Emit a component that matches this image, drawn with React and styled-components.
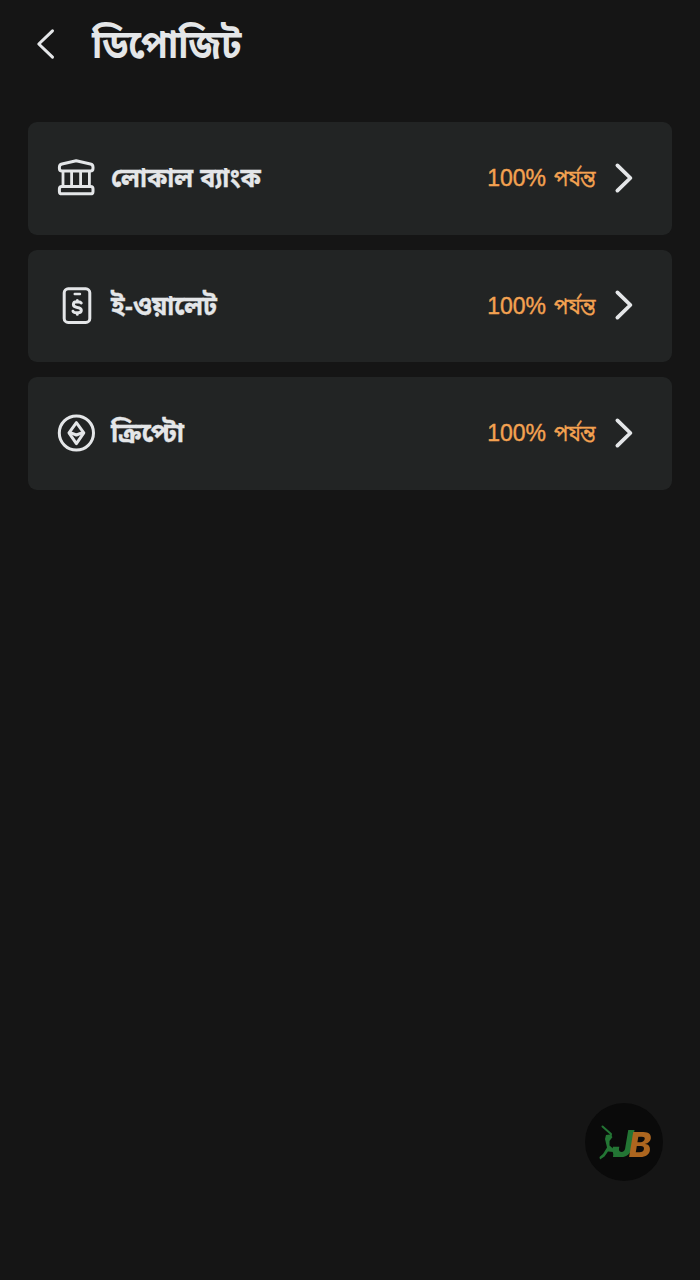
import React from 'react';
import styled, { createGlobalStyle } from 'styled-components';

const GlobalStyle = createGlobalStyle`
  * {
    box-sizing: border-box;
  }

  body {
    margin: 0;
    background: #151515;
    color: #e4e6e8;
    font-family: "Liberation Sans", "Noto Sans Bengali", "Noto Sans", sans-serif;
  }
`;

const Page = styled.div`
  min-height: 1280px;
  background: #151515;
`;

const Header = styled.header`
  display: flex;
  align-items: center;
  height: 88px;
  padding-left: 36px;
`;

const BackButton = styled.button`
  display: flex;
  width: 20px;
  margin-right: 36px;
  padding: 0;
  border: none;
  background: none;
  color: inherit;
  cursor: pointer;
`;

const Title = styled.h1`
  margin: 0;
  font-size: 40px;
  line-height: 60px;
  font-weight: bold;
  white-space: nowrap;
  transform: scaleX(0.905);
  transform-origin: left center;
`;

const List = styled.main`
  display: flex;
  flex-direction: column;
  gap: 15px;
  padding: 34px 28px 0;
`;

const Card = styled.div`
  display: flex;
  align-items: center;
  height: 112.5px;
  padding: 0 38px 0 28px;
  border-radius: 9px;
  background: #222424;
  cursor: pointer;
`;

const Label = styled.span`
  flex: 1;
  margin-left: 15px;
  font-size: 26px;
  line-height: 40px;
  font-weight: bold;
  white-space: nowrap;
  transform: scaleX(${({ $stretch }) => $stretch});
  transform-origin: left center;
  -webkit-text-stroke: 0.3px currentColor;
`;

const Bonus = styled.span`
  display: flex;
  align-items: baseline;
  gap: 8px;
  margin-right: 18px;
  color: #f4a251;
  font-size: 23px;
  line-height: 36px;
  white-space: nowrap;
  -webkit-text-stroke: 0.4px currentColor;
`;

const Suffix = styled.span`
  width: 42px;
  transform: scaleX(0.86);
  transform-origin: left center;
`;

const Icon = styled.svg`
  display: block;
  flex: none;
  fill: none;
  stroke: currentColor;
  stroke-linecap: round;
  stroke-linejoin: round;
`;

const Arrow = styled(Icon)`
  margin-bottom: 1px;
`;

const FloatingButton = styled.button`
  position: fixed;
  right: 37px;
  bottom: 99px;
  width: 78px;
  height: 78px;
  padding: 0;
  border: none;
  border-radius: 50%;
  background: #0a0a0a;
  cursor: pointer;
`;

const Logo = styled.svg`
  display: block;
  font-family: Inter, sans-serif;
  font-weight: 800;
  font-style: italic;
`;

const BankIcon = () => (
  <Icon width="40" height="40" viewBox="0 0 40 40" strokeWidth="3">
    <path d="M3.4 9.2 Q3.4 6.6 6 6 L20.2 2.8 L34.4 6 Q37 6.6 37 9.2 V10.2 Q37 13 34.4 13 H6 Q3.4 13 3.4 10.2 Z" />
    <rect x="3.4" y="28.4" width="33.6" height="7.4" rx="2.4" />
    <path strokeWidth="2.8" d="M7 14 V28 M15.6 14 V28 M24.6 14 V28 M33.4 14 V28" />
  </Icon>
);

const WalletIcon = () => (
  <Icon width="40" height="40" viewBox="0 0 40 40" strokeWidth="3">
    <rect x="8.2" y="2.8" width="25.6" height="33.6" rx="4" />
    <path d="M18.7 8 H24" strokeWidth="2.4" />
    <path d="M25.2 17 Q24.5 15.8 22 15.8 H20.6 Q17.4 15.8 17.4 18.6 Q17.4 21 21.2 21.4 Q25.3 21.9 25.3 24.2 Q25.3 26.7 22 26.7 H20.4 Q17.6 26.7 17 25.2 M21.3 14.5 V16 M21.3 27 V28.3" />
  </Icon>
);

const CryptoIcon = () => (
  <Icon width="40" height="40" viewBox="0 0 40 40" strokeWidth="3">
    <circle cx="20.4" cy="20" r="17.1" />
    <path d="M20.4 9.7 L27.8 19.8 L20.4 30.6 L13 19.8 Z" />
    <path d="M14.2 19.6 L20.4 22 L26.6 19.6" />
  </Icon>
);

const ArrowIcon = () => (
  <Arrow width="20" height="32" viewBox="0 0 20 32" strokeWidth="3.8">
    <path d="M3.4 3.4 L16.4 16 L3.4 28.6" />
  </Arrow>
);

const methods = [
  { name: 'লোকাল ব্যাংক', stretch: 0.96, icon: BankIcon },
  { name: 'ই-ওয়ালেট', stretch: 0.955, icon: WalletIcon },
  { name: 'ক্রিপ্টো', stretch: 0.985, icon: CryptoIcon },
];

const App = () => {
  return (
    <Page>
      <GlobalStyle />
      <Header>
        <BackButton>
          <Icon width="20" height="32" viewBox="0 0 20 32" strokeWidth="3">
            <path d="M16.5 2.8 L2.8 16 L16.5 29.2" />
          </Icon>
        </BackButton>
        <Title>ডিপোজিট</Title>
      </Header>
      <List>
        {methods.map(({ name, stretch, icon: MethodIcon }) => (
          <Card key={name}>
            <MethodIcon />
            <Label $stretch={stretch}>{name}</Label>
            <Bonus>
              100%
              <Suffix>পর্যন্ত</Suffix>
            </Bonus>
            <ArrowIcon />
          </Card>
        ))}
      </List>
      <FloatingButton>
        <Logo width="78" height="78" viewBox="0 0 78 78">
          {/* batsman */}
          <path
            fill="none"
            stroke="#237534"
            strokeWidth="2"
            strokeLinecap="round"
            strokeLinejoin="round"
            d="M17.5 23.5 L26 31 L25.5 34"
          />
          <path
            fill="#237534"
            d="M21 32 L24.5 31.5 L27.5 34 L24.5 38 L24.5 42.5 L28 45.5 L33.5 44 L31 51 H40 L38 54 H28 L28.5 49 L23 48.5 L19.5 53.5 L15 56.5 L14.5 54 L18 51 L22 44.5 L20 36 Z"
          />
          <text x="27" y="54" fill="#237534" fontSize="37">
            J
            <tspan dx="-5" fill="#ad661f" fontSize="34">B</tspan>
          </text>
        </Logo>
      </FloatingButton>
    </Page>
  );
};

export default App;
